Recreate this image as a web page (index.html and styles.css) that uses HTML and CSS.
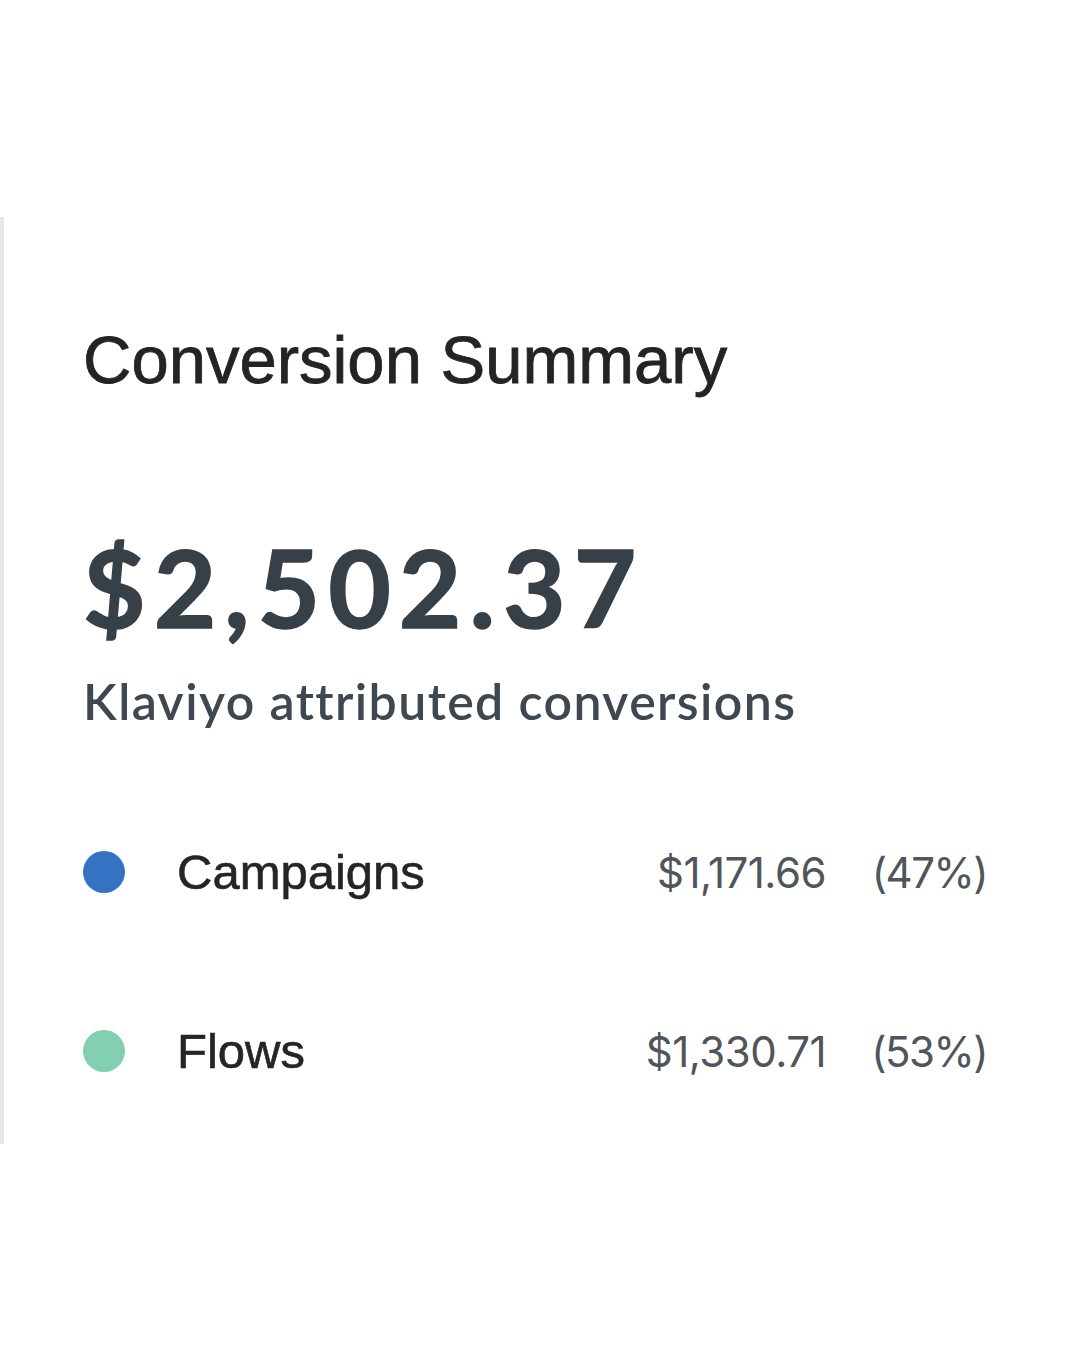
FILE: index.html
```html
<!DOCTYPE html>
<html lang="en">
<head>
<meta charset="utf-8">
<title>Conversion Summary</title>
<link rel="stylesheet" href="styles.css">
</head>
<body>
<div class="page">
  <section class="card">
    <h1 class="title">Conversion Summary</h1>
    <div class="total">$2,502.37</div>
    <div class="subtitle">Klaviyo attributed conversions</div>
    <ul class="breakdown">
      <li class="row">
        <span class="dot dot-campaigns"></span>
        <span class="label">Campaigns</span>
        <span class="value">$1,171.66</span>
        <span class="pct">(47%)</span>
      </li>
      <li class="row">
        <span class="dot dot-flows"></span>
        <span class="label">Flows</span>
        <span class="value">$1,330.71</span>
        <span class="pct">(53%)</span>
      </li>
    </ul>
  </section>
</div>
</body>
</html>
```
FILE: styles.css
```css
html, body {
  margin: 0;
  padding: 0;
  background: #ffffff;
}
.page {
  width: 1080px;
  height: 1350px;
  padding-top: 217px;
  box-sizing: border-box;
}
.card {
  border-left: 4px solid #e6e6e6;
  height: 927px;
  box-sizing: border-box;
  padding: 109px 93px 0 79px;
}
.title {
  margin: 0;
  font-family: "Liberation Sans", Arial, sans-serif;
  font-weight: 400;
  font-size: 67px;
  line-height: 67px;
  color: #222426;
  -webkit-text-stroke: 0.8px #222426;
}
.total {
  margin-top: 139px;
  font-family: Lato, sans-serif;
  font-weight: 700;
  font-size: 108px;
  line-height: 108px;
  color: #373f47;
  letter-spacing: 8px;
  -webkit-text-stroke: 1.5px #373f47;
}
.subtitle {
  margin-top: 36px;
  font-family: Lato, sans-serif;
  font-weight: 600;
  font-size: 50px;
  line-height: 50px;
  color: #3f4850;
  letter-spacing: 1.4px;
}
.breakdown {
  list-style: none;
  margin: 116px 0 0;
  padding: 0;
  display: flex;
  flex-direction: column;
  gap: 119px;
}
.row {
  display: grid;
  grid-template-columns: 42px 1fr auto 161px;
  align-items: center;
  height: 60px;
}
.dot {
  width: 42px;
  height: 42px;
  border-radius: 50%;
}
.dot-campaigns { background: #3572c3; }
.dot-flows { background: #82cfb1; }
.label {
  padding-left: 52px;
  font-family: "Liberation Sans", Arial, sans-serif;
  font-size: 49px;
  color: #232527;
  -webkit-text-stroke: 0.6px #232527;
}
.value, .pct {
  font-family: Inter, sans-serif;
  font-size: 42px;
  letter-spacing: -0.5px;
  color: #50555b;
  text-align: right;
}
.pct {
  letter-spacing: -1.5px;
}
```
